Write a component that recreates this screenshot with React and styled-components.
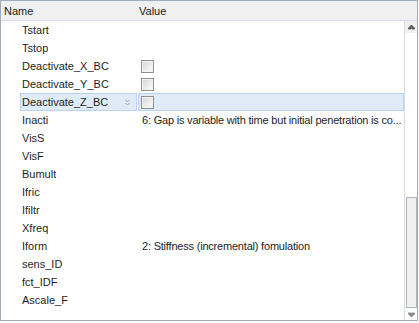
import styled, { createGlobalStyle } from "styled-components";

const GlobalStyle = createGlobalStyle`
  body {
    margin: 0;
    background: #ffffff;
    font-family: "Liberation Sans", Arial, sans-serif;
    font-size: 11px;
    color: #1e1e1e;
  }
`;

const Frame = styled.div`
  width: 416px;
  height: 319px;
  border: 1px solid #a3acb6;
  display: flex;
  flex-direction: column;
  background: #ffffff;
`;

const Header = styled.div`
  display: grid;
  grid-template-columns: 136px 1fr;
  height: 19px;
  background: #f0f0f0;
  border-bottom: 1px solid #d5dce3;
  box-sizing: border-box;
  height: 20px;
`;

const HeaderCell = styled.div`
  padding: 3px 0 0 ${({ $pad }) => $pad}px;
  line-height: 15px;
  color: #1a1a1a;
`;

const Body = styled.div`
  flex: 1;
  display: flex;
  min-height: 0;
`;

const List = styled.div`
  flex: 1;
  display: flex;
  flex-direction: column;
  border-right: 1px solid #dcdcdc;
`;

const Row = styled.div`
  display: grid;
  grid-template-columns: 19px 117px 1fr;
  height: 18px;
  line-height: 16px;
`;

const Cell = styled.div`
  border: 1px solid ${({ $selected }) => ($selected ? "#b7d3f1" : "transparent")};
  background: ${({ $selected }) => ($selected ? "#dfebf7" : "transparent")};
  display: flex;
  align-items: center;
  white-space: nowrap;
  overflow: hidden;
  min-width: 0;
`;

const NameCell = styled(Cell)`
  padding-left: 1px;
  justify-content: space-between;
  padding-right: 6px;
`;

const ValueCell = styled(Cell)`
  padding-left: 3px;
  margin-left: 1px;
  letter-spacing: -0.2px;
`;

const Label = styled.span`
  overflow: hidden;
  text-overflow: clip;
`;

const Check = styled.span`
  width: 11px;
  height: 11px;
  border: 1px solid #8e8f8f;
  box-shadow: inset 0 0 0 1px #f4f4f4;
  background: linear-gradient(135deg, #d4d4d4 0%, #eeeeee 60%, #fbfbfb 100%);
  margin-left: -1px;
`;

const Scrollbar = styled.div`
  width: 12px;
  display: flex;
  flex-direction: column;
  background: #ffffff;
`;

const Arrow = styled.div`
  height: 12px;
  background: ${({ $bg }) => $bg};
  display: flex;
  align-items: center;
  justify-content: center;
`;

const Track = styled.div`
  flex: 1;
  display: flex;
  flex-direction: column;
  justify-content: flex-end;
  padding-top: 164px;
`;

const Thumb = styled.div`
  flex: 1;
  margin: 0 0 0 1px;
  border: 1px solid #a9b6c3;
  background: #f0f0f0;
`;

const rows = [
  { name: "Tstart" },
  { name: "Tstop" },
  { name: "Deactivate_X_BC", check: true },
  { name: "Deactivate_Y_BC", check: true },
  { name: "Deactivate_Z_BC", check: true, selected: true },
  { name: "Inacti", value: "6: Gap is variable with time but initial penetration is co..." },
  { name: "VisS" },
  { name: "VisF" },
  { name: "Bumult" },
  { name: "Ifric" },
  { name: "Ifiltr" },
  { name: "Xfreq" },
  { name: "Iform", value: "2: Stiffness (incremental) fomulation" },
  { name: "sens_ID" },
  { name: "fct_IDF" },
  { name: "Ascale_F" },
];

function Chevrons() {
  return (
    <svg width="5" height="7" viewBox="0 0 5 7">
      <path d="M0.5 1 L2.5 3 L4.5 1 M0.5 4 L2.5 6 L4.5 4" stroke="#a8a8a8" fill="none" strokeWidth="1" />
    </svg>
  );
}

export default function App() {
  return (
    <>
      <GlobalStyle />
      <Frame>
        <Header>
          <HeaderCell $pad={3}>Name</HeaderCell>
          <HeaderCell $pad={2}>Value</HeaderCell>
        </Header>
        <Body>
          <List>
            {rows.map((r) => (
              <Row key={r.name}>
                <span />
                <NameCell $selected={r.selected}>
                  <Label>{r.name}</Label>
                  {r.selected && <Chevrons />}
                </NameCell>
                <ValueCell $selected={r.selected}>
                  {r.check ? <Check /> : r.value}
                </ValueCell>
              </Row>
            ))}
          </List>
          <Scrollbar>
            <Arrow $bg="#f0f0f0">
              <svg width="7" height="5" viewBox="0 0 7 5">
                <path d="M0 4 L3.5 0.5 L7 4 M1.5 4.5 L3.5 2.5 L5.5 4.5" stroke="#5c5c5c" fill="none" strokeWidth="1.4" />
              </svg>
            </Arrow>
            <Track>
              <Thumb />
            </Track>
            <Arrow $bg="#ffffff">
              <svg width="7" height="5" viewBox="0 0 7 5">
                <path d="M0 1 L3.5 4.5 L7 1 M1.5 0.5 L3.5 2.5 L5.5 0.5" stroke="#8a8a8a" fill="none" strokeWidth="1.4" />
              </svg>
            </Arrow>
          </Scrollbar>
        </Body>
      </Frame>
    </>
  );
}
